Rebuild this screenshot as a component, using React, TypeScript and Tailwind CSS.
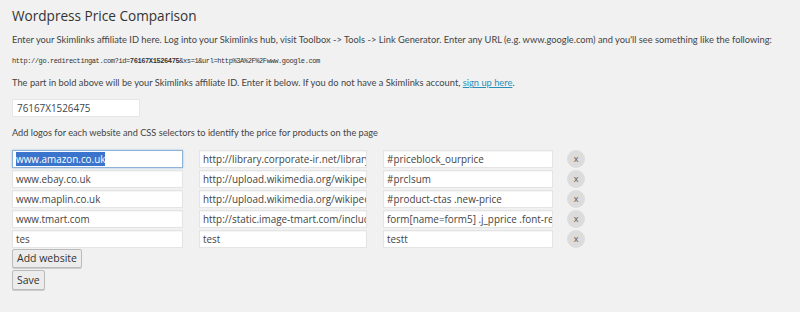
const rows = [
  ["www.amazon.co.uk", "http://library.corporate-ir.net/library/", "#priceblock_ourprice"],
  ["www.ebay.co.uk", "http://upload.wikimedia.org/wikipedia/", "#prcIsum"],
  ["www.maplin.co.uk", "http://upload.wikimedia.org/wikipedia/", "#product-ctas .new-price"],
  ["www.tmart.com", "http://static.image-tmart.com/include/", "form[name=form5] .j_pprice .font-red"],
  ["tes", "test", "testt"],
];

function Field({ value, focused }: { value: string; focused?: boolean }) {
  return (
    <div
      className={`h-[18px] overflow-hidden whitespace-nowrap bg-white px-[3px] text-[9.9px] leading-[16px] ${
        focused ? "border border-[#8fb2d6] shadow-[0_0_2px_#9cc0e6]" : "border border-[#e4e4e4] shadow-[inset_0_1px_1px_rgba(0,0,0,0.04)]"
      }`}
    >
      {focused ? <span className="bg-[#3a74cc] text-white">{value}</span> : value}
    </div>
  );
}

export default function App() {
  return (
    <div
      className="h-[312px] w-[800px] bg-[#f1f1f1] px-3 pt-[6px] text-[#444]"
      style={{ fontFamily: '"Open Sans", "Noto Sans", sans-serif' }}
    >
      <h2 className="text-[13.6px] leading-[20px] text-[#333]">Wordpress Price Comparison</h2>
      <div style={{ fontFamily: 'Lato, "Open Sans", sans-serif' }}>
        <p className="mt-[7px] whitespace-nowrap text-[9.3px] leading-[14px]">
          Enter your Skimlinks affiliate ID here. Log into your Skimlinks hub, visit Toolbox -&gt; Tools -&gt; Link Generator. Enter any URL (e.g. www.google.com) and you'll see something like the following:
        </p>
        <p
          className="mt-[7px] text-[7px] leading-[14px] tracking-[-0.4px] text-[#333]"
          style={{ fontFamily: '"Liberation Mono", monospace' }}
        >
          http://go.redirectingat.com?id=<b>76167X1526475</b>&amp;xs=1&amp;url=http%3A%2F%2Fwww.google.com
        </p>
        <p className="mt-[8px] text-[9.3px] leading-[14px]">
          The part in bold above will be your Skimlinks affiliate ID. Enter it below. If you do not have a Skimlinks account,{" "}
          <a className="text-[#2a8fb8] underline">sign up here</a>.
        </p>
      </div>
      <div className="mt-[9px] h-[18px] w-[128px] border border-[#e6e6e6] bg-white px-[4px] text-[9.9px] leading-[16px]">
        76167X1526475
      </div>
      <p
        className="mt-[9px] text-[9.2px] leading-[14px]"
        style={{ fontFamily: 'Lato, "Open Sans", sans-serif' }}
      >
        Add logos for each website and CSS selectors to identify the price for products on the page
      </p>
      <div className="mt-[10px] flex flex-col gap-[2px]">
        {rows.map((r, i) => (
          <div key={i} className="flex items-center">
            <div className="w-[171px]">
              <Field value={r[0]} focused={i === 0} />
            </div>
            <div className="ml-[16px] w-[168px]">
              <Field value={r[1]} />
            </div>
            <div className="ml-[16px] w-[170px]">
              <Field value={r[2]} />
            </div>
            <div className="ml-[14px] flex h-[18px] w-[18px] items-center justify-center rounded-full bg-[#dcdcdc] pb-[1px] text-[9px] leading-none text-[#555]">
              x
            </div>
          </div>
        ))}
      </div>
      <div className="mt-[1px] flex flex-col items-start gap-[2px]">
        <button className="h-[19px] rounded-[2px] border border-[#bbb] bg-[#ececec] px-[4px] text-[10.5px] leading-none text-[#333] shadow-[0_1px_0_#ccc]">
          Add website
        </button>
        <button className="h-[20px] rounded-[2px] border border-[#bbb] bg-[#ececec] px-[4px] text-[10.5px] leading-none text-[#333] shadow-[0_1px_0_#ccc]">
          Save
        </button>
      </div>
    </div>
  );
}
